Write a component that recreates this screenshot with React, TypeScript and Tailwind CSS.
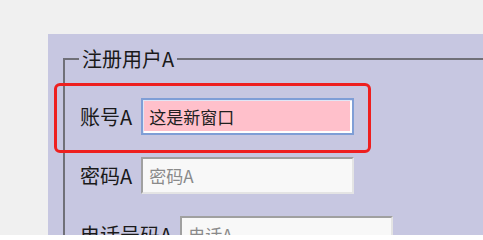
import React from 'react'

const font = { fontFamily: '"Noto Sans CJK SC", "Noto Sans", sans-serif' }

export default function App() {
  return (
    <div
      className="w-[483px] h-[235px] overflow-hidden bg-[#f0f0f0] pt-[34px] pl-[48px]"
      style={font}
    >
      <div className="w-[520px] h-[300px] bg-[#c7c7e1] pt-[11px] pl-[15px]">
        <fieldset className="w-[480px] h-[260px] border-2 border-[#707078] pt-[25px] pl-[15px]">
          <legend className="-ml-[1px] px-[3px] text-[20px] leading-[28px] text-[#1a1a1a]">
            注册用户A
          </legend>

          <div className="flex flex-col gap-[22px]">
            <div className="relative flex items-center gap-[9px]">
              <span className="absolute -left-[26px] top-[-15px] bottom-[-18px] w-[317px] border-[3px] border-[#ee1f1f] rounded-[6px] pointer-events-none" />
              <label className="text-[20px] leading-[28px] text-[#1a1a1a]">账号A</label>
              <input
                className="w-[213px] h-[37px] border-2 border-[#7f9ed6] bg-[#ffc0cb] px-[6px] text-[17px] text-[#202020] shadow-[inset_1px_1px_0_#dfe6f6,inset_-2px_-2px_0_#fff] focus:outline-none"
                type="text"
                defaultValue="这是新窗口"
                style={font}
              />
            </div>

            <div className="flex items-center gap-[9px]">
              <label className="text-[20px] leading-[28px] text-[#1a1a1a]">密码A</label>
              <input
                className="w-[213px] h-[37px] border-2 border-t-[#a0a0a0] border-l-[#a0a0a0] border-r-[#e4e4e4] border-b-[#e4e4e4] bg-[#f8f8f8] px-[6px] text-[17px] text-[#202020] placeholder:text-[#8a8a8a] focus:outline-none"
                type="password"
                placeholder="密码A"
                style={font}
              />
            </div>

            <div className="flex items-center gap-[8px]">
              <label className="text-[20px] leading-[28px] text-[#1a1a1a]">电话号码A</label>
              <input
                className="w-[213px] h-[37px] border-2 border-t-[#a0a0a0] border-l-[#a0a0a0] border-r-[#e4e4e4] border-b-[#e4e4e4] bg-[#f8f8f8] px-[6px] text-[17px] text-[#202020] placeholder:text-[#8a8a8a] focus:outline-none"
                type="text"
                placeholder="电话A"
                style={font}
              />
            </div>
          </div>
        </fieldset>
      </div>
    </div>
  )
}
